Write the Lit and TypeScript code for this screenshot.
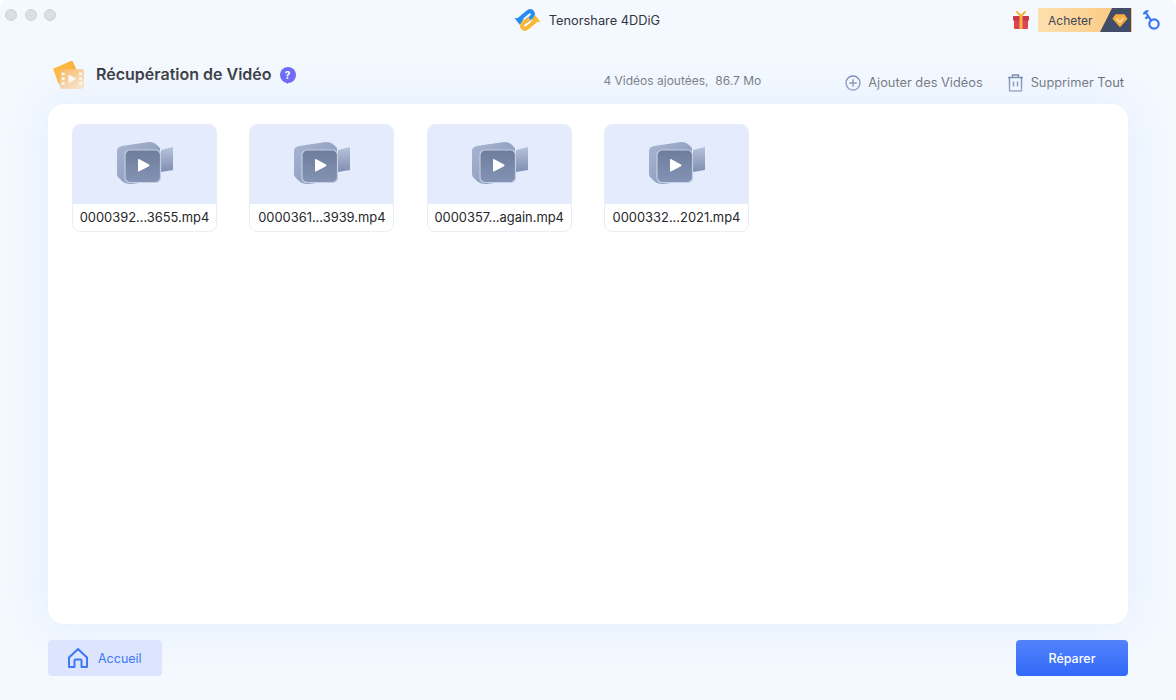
import { LitElement, html, css, svg } from "lit";
import { customElement } from "lit/decorators.js";

const camera = svg`<svg class="cam" width="58" height="44" viewBox="0 0 58 44">
  <defs>
    <linearGradient id="cb" x1="0" y1="0" x2="1" y2="1"><stop offset="0" stop-color="#a9b6d2"/><stop offset="1" stop-color="#8393b6"/></linearGradient>
    <linearGradient id="cf" x1="0" y1="0" x2="0" y2="1"><stop offset="0" stop-color="#6f7c9c"/><stop offset="1" stop-color="#8493b4"/></linearGradient>
    <linearGradient id="cl" x1="0" y1="0" x2="0" y2="1"><stop offset="0" stop-color="#b7c2da"/><stop offset="1" stop-color="#7f8fb1"/></linearGradient>
  </defs>
  <path d="M45 9 L57 6 V29 L45 31 Z" fill="url(#cl)"/>
  <path d="M6 5 L33 1 Q38 1 41 4 L44 7 V36 Q44 40 40 40 L15 43 Q9 43 6 40 L3 37 Q1 36 1 32 V10 Q1 6 6 5 Z" fill="url(#cb)"/>
  <rect x="9" y="9" width="35.500" height="32.500" rx="5" fill="url(#cf)" stroke="#c3cde3" stroke-width="1.200"/>
  <path d="M22 19 Q22 17.500 23.400 18.300 L33 23.400 Q34.200 24.300 33 25.200 L23.400 30.300 Q22 31 22 29.500 Z" fill="#fff"/>
</svg>`;

const logo = svg`<svg width="27" height="24" viewBox="0 0 27 24">
  <path d="M5.500 14 V11 L14 4 Q17 2.200 18.500 4.500 Q20 7 17 9.500 L11.500 13.500" fill="none" stroke="#2b8cf0" stroke-width="4" stroke-linejoin="round"/>
  <path d="M0.500 10 L6 17 L10 10.500 Z" fill="#2b8cf0"/>
  <path d="M21.500 10 V13 L13 20 Q10 21.800 8.500 19.500 Q7 17 10 14.500 L15.500 10.500" fill="none" stroke="#f9b833" stroke-width="4" stroke-linejoin="round"/>
  <path d="M26.500 14 L21 7 L17 13.500 Z" fill="#f9b833"/>
</svg>`;

const gift = svg`<svg width="16" height="18" viewBox="0 0 16 18">
  <path d="M1 8 H15 V17 Q15 18 14 18 H2 Q1 18 1 17 Z" fill="#dc4453"/>
  <rect x="0" y="5" width="16" height="4.500" rx=".5" fill="#c93646"/>
  <rect x="6.500" y="5" width="3" height="13" fill="#f8b53c"/>
  <path d="M8 5 L4 1 M8 5 L12 1" stroke="#f8b53c" stroke-width="2" fill="none" stroke-linecap="round"/>
</svg>`;

const key = svg`<svg width="17" height="20" viewBox="0 0 17 20">
  <circle cx="11" cy="14" r="4.700" fill="none" stroke="#3b78f5" stroke-width="2.200"/>
  <path d="M8 10.500 L2.500 2 M2.500 2 L1 3.500 M5.500 6.500 L3 8 M2.500 2 L4.500 1" stroke="#3b78f5" stroke-width="2.200" fill="none" stroke-linecap="round"/>
</svg>`;

const film = svg`<svg width="33" height="30" viewBox="0 0 34 31">
  <defs>
    <linearGradient id="fa" x1="0" y1="0" x2="1" y2="1"><stop offset="0" stop-color="#fdc03c"/><stop offset="1" stop-color="#fb9f2c"/></linearGradient>
    <linearGradient id="fb" x1="0" y1="0" x2="1" y2="1"><stop offset="0" stop-color="#fbb45a"/><stop offset="1" stop-color="#fde3c3"/></linearGradient>
  </defs>
  <path d="M1 9 L19.500 1 Q21 .5 21.800 2 L26 12 L11 28 L6.500 24 Z" fill="url(#fa)"/>
  <rect x="8" y="9.500" width="25" height="20.500" rx="2" fill="url(#fb)"/>
  <g fill="#fff" opacity=".92">
    <rect x="10" y="13" width="3" height="2.500"/><rect x="10" y="18" width="3" height="2.500"/><rect x="10" y="23" width="3" height="2.500"/>
    <rect x="28" y="13" width="3" height="2.500"/><rect x="28" y="18" width="3" height="2.500"/><rect x="28" y="23" width="3" height="2.500"/>
    <path d="M17 15 L25 19.500 L17 24 Z"/>
  </g>
</svg>`;

const files = ["0000392...3655.mp4", "0000361...3939.mp4", "0000357...again.mp4", "0000332...2021.mp4"];

@customElement("app-root")
export class AppRoot extends LitElement {
  static styles = css`
    :host {
      display: block;
      width: 1176px;
      height: 700px;
      overflow: hidden;
      font-family: Inter, "Liberation Sans", sans-serif;
      background: #fff;
    }
    .win {
      height: 700px;
      box-sizing: border-box;
      border-radius: 8px 8px 0 0;
      background: #f4f9ff;
      display: flex;
      flex-direction: column;
      overflow: hidden;
    }
    .titlebar {
      height: 32px;
      flex: none;
      display: grid;
      grid-template-columns: 1fr auto 1fr;
      align-items: center;
      padding: 0 16px 0 5px;
    }
    .lights { display: flex; gap: 7.500px; margin-top: -2px; }
    .lights i {
      width: 12px;
      height: 12px;
      box-sizing: border-box;
      border-radius: 50%;
      background: #dcdfe2;
      border: 1px solid #cdd1d4;
    }
    .brand {
      display: flex;
      align-items: center;
      gap: 8px;
      font-size: 12.800px;
      color: #33363d;
      margin: 8px 0 0 9px;
    }
    .tools {
      display: flex;
      align-items: center;
      justify-content: flex-end;
      margin-top: 8px;
    }
    .gift { display: flex; margin-right: 9px; }
    .buy {
      display: flex;
      width: 94px;
      height: 24px;
      box-sizing: border-box;
      align-items: center;
      padding-left: 10px;
      font-size: 12px;
      color: #3f4657;
      background: linear-gradient(90deg, #fde0ae 0%, #fbc67c 100%);
      position: relative;
    }
    .gem {
      position: absolute;
      right: 1px;
      top: 0;
      width: 31px;
      height: 24px;
      background: #414c69;
      clip-path: polygon(39% 0, 100% 0, 100% 100%, 0 100%);
      display: flex;
      align-items: center;
      justify-content: center;
      padding-left: 9px;
      box-sizing: border-box;
    }
    .key { display: flex; margin-left: 11px; }
    .head {
      height: 72px;
      flex: none;
      box-sizing: border-box;
      padding: 25px 52px 0 52px;
      display: flex;
      align-items: flex-start;
    }
    .title { display: flex; align-items: center; }
    .f { display: flex; margin-right: 11px; margin-top: 3px; }
    .title h1 {
      margin: 0 8px 0 0;
      font-size: 16px;
      line-height: 20px;
      font-weight: 600;
      color: #222429;
    }
    .q {
      position: relative;
      width: 16px;
      height: 16px;
      border-radius: 50%;
      background: #6f6cf6;
      color: #fff;
      font-size: 10px;
      font-weight: 700;
      line-height: 16px;
      text-align: center;
      margin-top: 3px;
    }
    .q::after {
      content: "";
      position: absolute;
      left: 4px;
      bottom: -1px;
      width: 6px;
      height: 4px;
      background: #6f6cf6;
      clip-path: polygon(0 0, 100% 0, 70% 100%);
    }
    .count {
      margin-left: auto;
      margin-right: 84px;
      font-size: 12px;
      line-height: 16px;
      color: #5c6068;
      white-space: pre;
      padding-top: 16px;
    }
    .act {
      display: flex;
      align-items: center;
      gap: 7px;
      font-size: 12.800px;
      line-height: 18px;
      color: #50545c;
      padding-top: 17px;
    }
    .act + .act { margin-left: 24px; }
    .mid {
      flex: 1;
      padding: 0 48px;
      min-height: 0;
    }
    .card {
      height: 520px;
      box-sizing: border-box;
      background: #fff;
      border-radius: 16px;
      padding: 20px 24px;
      display: grid;
      grid-template-columns: repeat(4, 145px);
      grid-auto-rows: 108px;
      column-gap: 32.330px;
      box-shadow: 0 0 40px 8px #e6f0fe;
    }
    .file {
      box-sizing: border-box;
      border: 1px solid #e9edf5;
      border-radius: 8px;
      overflow: hidden;
      display: flex;
      flex-direction: column;
    }
    .thumb {
      height: 79px;
      flex: none;
      background: #e4ebfd;
      display: flex;
      align-items: center;
      justify-content: center;
    }
    .thumb .cam { margin-left: 1px; margin-top: -3px; }
    .name {
      flex: 1;
      font-size: 12.900px;
      line-height: 27px;
      color: #25272b;
      text-align: center;
      white-space: nowrap;
    }
    .foot {
      flex: none;
      height: 76px;
      box-sizing: border-box;
      padding: 16px 48px 0;
      display: flex;
      align-items: flex-start;
      justify-content: space-between;
    }
    .home {
      width: 114px;
      height: 36px;
      box-sizing: border-box;
      border-radius: 4px;
      background: #dce5fd;
      color: #3e78f7;
      font-size: 12.500px;
      display: flex;
      align-items: center;
      gap: 9px;
      padding-left: 19px;
    }
    .repair {
      width: 112px;
      height: 36px;
      border-radius: 4px;
      background: linear-gradient(180deg, #5283fa 0%, #3269fa 100%);
      color: #fff;
      font-size: 12.500px;
      font-weight: 500;
      display: flex;
      align-items: center;
      justify-content: center;
    }
  `;

  render() {
    return html`<div class="win">
      <div class="titlebar">
        <div class="lights"><i></i><i></i><i></i></div>
        <div class="brand">${logo}<span>Tenorshare 4DDiG</span></div>
        <div class="tools">
          <span class="gift">${gift}</span>
          <div class="buy">Acheter
            <span class="gem">
              <svg width="16" height="15" viewBox="0 0 18 16">
                <path d="M4 1 H14 L17.500 6 L9 15.500 L.5 6 Z" fill="#f7ad3f"/>
                <path d="M5 6 L9 10 L13 5" fill="none" stroke="#fde9c4" stroke-width="1.500"/>
              </svg>
            </span>
          </div>
          <span class="key">${key}</span>
        </div>
      </div>
      <div class="head">
        <div class="title">
          <span class="f">${film}</span>
          <h1>Récupération de Vidéo</h1>
          <div class="q">?</div>
        </div>
        <div class="count">4 Vidéos ajoutées,  86.7 Mo</div>
        <div class="act">
          <svg width="16" height="16" viewBox="0 0 16 16" fill="none" stroke="#6c7da6" stroke-width="1.400">
            <circle cx="8" cy="8" r="7"/><path d="M8 4.200 V11.800 M4.200 8 H11.800"/>
          </svg>
          Ajouter des Vidéos
        </div>
        <div class="act">
          <svg width="17" height="18" viewBox="0 0 16 18" fill="none" stroke="#6c7da6" stroke-width="1.500">
            <path d="M.5 3.500 H15.500 M5 3.500 V1 H11 V3.500"/>
            <path d="M2 3.500 V16.500 Q2 17 2.500 17 H13.500 Q14 17 14 16.500 V3.500"/>
            <path d="M6 7.500 V12.500 M10 7.500 V12.500"/>
          </svg>
          Supprimer Tout
        </div>
      </div>
      <div class="mid">
        <div class="card">
          ${files.map(
            (f) => html`<div class="file">
              <div class="thumb">${camera}</div>
              <div class="name">${f}</div>
            </div>`
          )}
        </div>
      </div>
      <div class="foot">
        <div class="home">
          <svg width="22" height="22" viewBox="0 0 22 22" fill="none" stroke="#3e78f7" stroke-width="2" stroke-linejoin="round">
            <path d="M11 2 L20 10.500 V20 H14.500 V13.500 Q14.500 12.500 13.500 12.500 H8.500 Q7.500 12.500 7.500 13.500 V20 H2 V10.500 Z"/>
          </svg>
          Accueil
        </div>
        <div class="repair">Réparer</div>
      </div>
    </div>`;
  }
}
